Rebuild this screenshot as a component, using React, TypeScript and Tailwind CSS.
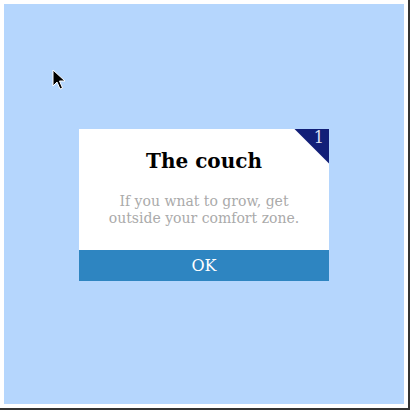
import React from "react";

const Cursor = () => (
  <svg width="14" height="22" viewBox="0 0 14 22" className="absolute left-[48px] top-[65px]">
    <path d="M1 1 L1 17 L5 13 L8 20 L10.5 19 L7.5 12 L13 12 Z" fill="#000" stroke="#fff" strokeWidth="1" strokeLinejoin="round" />
  </svg>
);

const App = () => {
  return (
    <div className="w-[410px] h-[410px] bg-[#333333]">
      <div className="w-[408px] h-[408px] bg-white p-1">
        <div
          className="relative w-[400px] h-[400px] bg-[#b5d6fd] flex items-center justify-center"
          style={{ fontFamily: '"DejaVu Serif", serif' }}
        >
          <Cursor />
          <div className="relative w-[250px] bg-white overflow-hidden mt-[1px]">
            <div className="absolute top-0 right-0 w-[35px] h-[35px] bg-[#121f78] [clip-path:polygon(0_0,100%_0,100%_100%)]" />
            <span className="absolute top-0 right-[5px] text-[16px] leading-[18px] text-[#dfe3f5]">1</span>
            <div className="pt-[20px] pb-[23px] px-4 text-center">
              <h1 className="text-[20px] leading-[24px] font-bold text-black">The couch</h1>
              <p className="mt-[20px] text-[14px] leading-[17px] text-[#aaaaaa]">
                If you wnat to grow, get
                <br />
                outside your comfort zone.
              </p>
            </div>
            <button className="w-full h-[31px] bg-[#2e85c1] text-white text-[16px] leading-[31px]">OK</button>
          </div>
        </div>
      </div>
    </div>
  );
};

export default App;
